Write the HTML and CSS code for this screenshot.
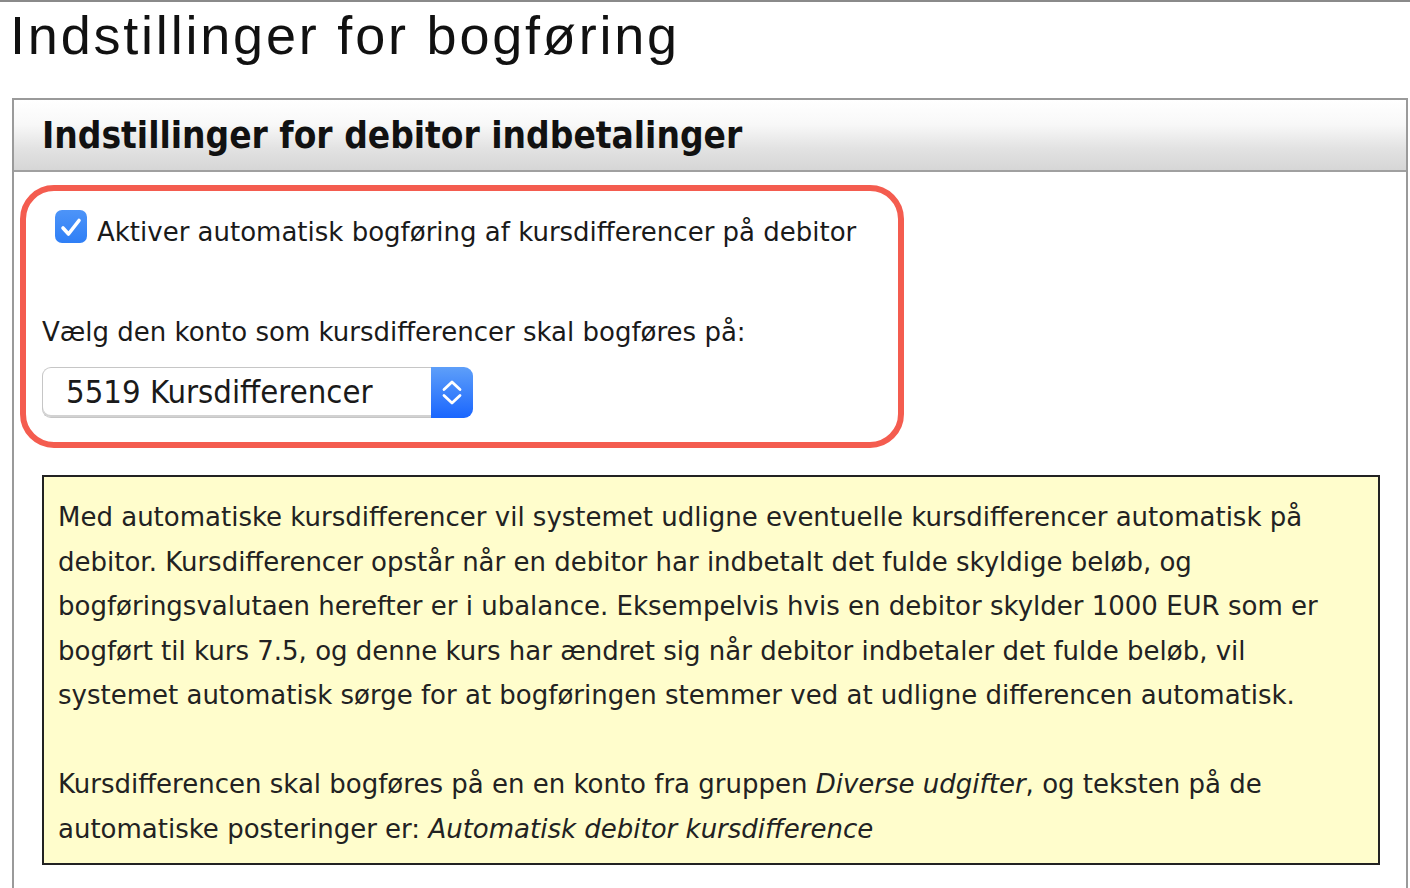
FILE: index.html
```html
<!DOCTYPE html>
<html lang="da">
<head>
<meta charset="utf-8">
<title>Indstillinger for bogføring</title>
<link rel="stylesheet" href="styles.css">
</head>
<body>
<div class="topline"></div>
<h1 class="page-title">Indstillinger for bogføring</h1>
<section class="panel">
  <header class="panel-head">
    <h2>Indstillinger for debitor indbetalinger</h2>
  </header>
  <div class="panel-body">
    <div class="highlight">
      <label class="check-row">
        <span class="checkbox">
          <svg viewBox="0 0 32 33" width="32" height="33"><path d="M8 18 L13.5 24 L24 10.5" fill="none" stroke="#fff" stroke-width="3.6" stroke-linecap="round" stroke-linejoin="round"/></svg>
        </span>
        <span class="check-label">Aktiver automatisk bogføring af kursdifferencer på debitor</span>
      </label>
      <p class="field-label">Vælg den konto som kursdifferencer skal bogføres på:</p>
      <div class="select">
        <span class="select-value">5519 Kursdifferencer</span>
        <span class="select-arrows">
          <svg viewBox="0 0 20 25" width="20" height="25"><path d="M2 9.5 L10 2 L18 9.5 M2 15.5 L10 23 L18 15.5" fill="none" stroke="#fff" stroke-width="2.8" stroke-linecap="round" stroke-linejoin="round"/></svg>
        </span>
      </div>
    </div>
    <div class="info">
      <p class="info-par">Med automatiske kursdifferencer vil systemet udligne eventuelle kursdifferencer automatisk på debitor. Kursdifferencer opstår når en debitor har indbetalt det fulde skyldige beløb, og bogføringsvalutaen herefter er i ubalance. Eksempelvis hvis en debitor skylder 1000 EUR som er bogført til kurs 7.5, og denne kurs har ændret sig når debitor indbetaler det fulde beløb, vil systemet automatisk sørge for at bogføringen stemmer ved at udligne differencen automatisk.</p>
      <p class="info-par"><span>Kursdifferencen skal bogføres på en en konto fra gruppen </span><em>Diverse udgifter</em><span>, og teksten på de</span> <span>automatiske posteringer er: </span><em>Automatisk debitor kursdifference</em></p>
    </div>
  </div>
</section>
</body>
</html>
```
FILE: styles.css
```css
html, body {
  margin: 0;
  padding: 0;
  background: #fff;
  height: 100%;
  overflow: hidden;
}
body {
  font-family: "DejaVu Sans", sans-serif;
  color: #1a1a1a;
}
.topline {
  height: 2px;
  background: #8a8a8a;
}
.page-title {
  margin: 0;
  padding: 3px 0 0 10px;
  height: 88px;
  box-sizing: border-box;
  font-family: "Liberation Sans", Arial, sans-serif;
  font-weight: normal;
  font-size: 54px;
  line-height: 60px;
  letter-spacing: 2.8px;
  color: #111;
}
.panel {
  margin: 8px 0 0 12px;
  width: 1392px;
  border: 2px solid #9a9a9a;
  border-bottom: none;
  height: 800px;
}
.panel-head {
  height: 72px;
  box-sizing: border-box;
  padding: 4px 0 0 28px;
  background: linear-gradient(#ffffff 0%, #f8f8f8 35%, #e2e2e2 70%, #d6d6d6 100%);
  border-bottom: 2px solid #a0a0a0;
}
.panel-head h2 {
  margin: 0;
  font-family: "DejaVu Sans Condensed", "DejaVu Sans", sans-serif;
  font-weight: bold;
  font-size: 36.7px;
  line-height: 64px;
  color: #111;
}
.panel-body {
  padding: 13px 0 0 6px;
}
.highlight {
  width: 884px;
  height: 263px;
  box-sizing: border-box;
  border: 6px solid #f45c4f;
  border-radius: 34px;
  padding: 19px 0 0 16px;
}
.check-row {
  display: flex;
  align-items: center;
  gap: 10px;
  margin-left: 13px;
  height: 33px;
}
.checkbox {
  width: 32px;
  height: 33px;
  border-radius: 7px;
  background: linear-gradient(#4d94f8, #2f7ff6);
  display: flex;
  flex: none;
}
.check-label {
  font-size: 26px;
  position: relative;
  top: 5px;
}
.field-label {
  margin: 0;
  padding-top: 69px;
  font-size: 26px;
  line-height: 40px;
}
.select {
  margin-top: 15px;
  display: flex;
  width: 431px;
  height: 51px;
}
.select-value {
  flex: 1;
  box-sizing: border-box;
  border: 1.5px solid #c6c6c6;
  border-right: none;
  border-radius: 9px 0 0 9px;
  background: #fff;
  box-shadow: inset 0 -2px 0 #d2d2d2;
  padding-left: 23px;
  font-family: "DejaVu Sans Condensed", "DejaVu Sans", sans-serif;
  font-size: 32.6px;
  line-height: 48px;
  color: #1a1a1a;
}
.select-arrows {
  width: 42px;
  flex: none;
  border-radius: 0 9px 9px 0;
  background: linear-gradient(#5e9ff9, #1a66fe);
  display: flex;
  align-items: center;
  justify-content: center;
}
.info {
  margin: 27px 0 0 22px;
  width: 1338px;
  height: 390px;
  box-sizing: border-box;
  border: 2px solid #222;
  background: #fffdcc;
  padding: 18px 16px 0 14px;
  font-size: 26px;
  line-height: 44.5px;
  color: #222;
}
.info-par {
  margin: 0 0 44.5px;
}
.info em {
  font-style: italic;
}
```
